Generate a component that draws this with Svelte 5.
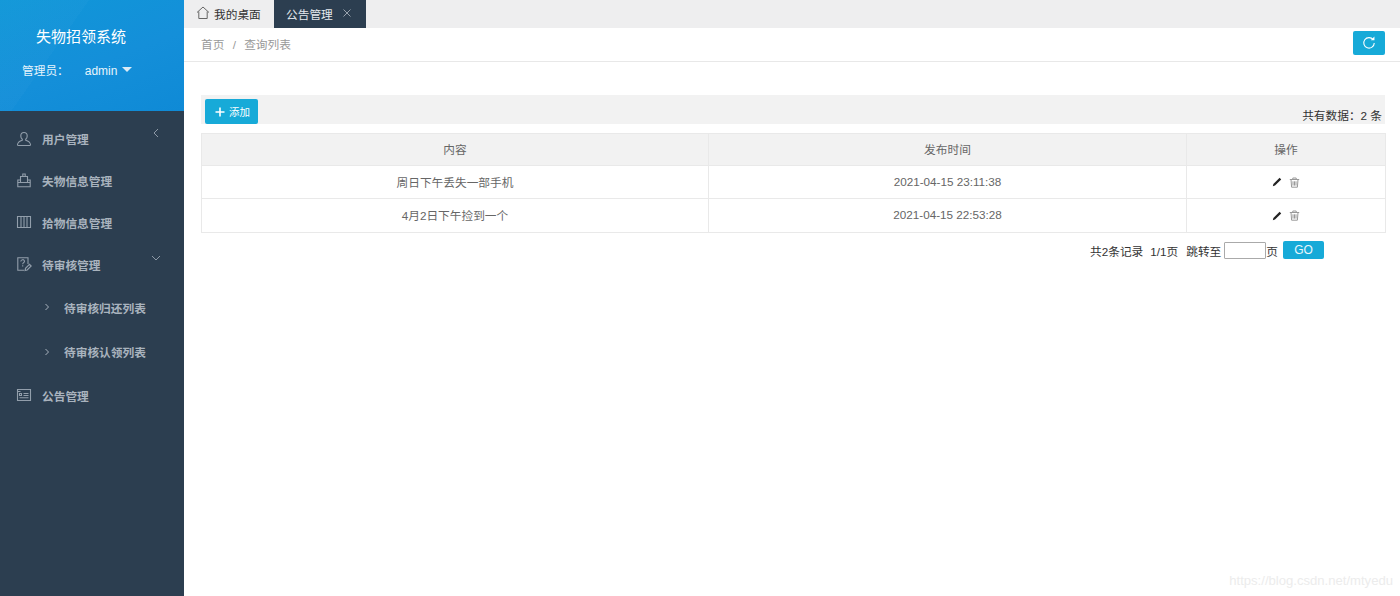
<script>
  const menu = [
    { label: '用户管理', icon: 'user', arrow: 'left' },
    { label: '失物信息管理', icon: 'box' },
    { label: '拾物信息管理', icon: 'columns' },
    { label: '待审核管理', icon: 'audit', arrow: 'down' },
    { label: '待审核归还列表', sub: true },
    { label: '待审核认领列表', sub: true },
    { label: '公告管理', icon: 'notice' }
  ];

  const rows = [
    { content: '周日下午丢失一部手机', time: '2021-04-15 23:11:38' },
    { content: '4月2日下午捡到一个', time: '2021-04-15 22:53:28' }
  ];
</script>

<div class="page">
  <aside class="sidebar">
    <header class="brand">
      <h1>失物招领系统</h1>
      <div class="account">
        <span>管理员：</span>
        <span class="name">admin</span>
        <i class="caret"></i>
      </div>
    </header>
    <nav class="menu">
      {#each menu as item}
        <a href="#top" class="item" class:sub={item.sub}>
          {#if item.sub}
            <svg class="sub-arrow" viewBox="0 0 8 8" width="8" height="8"><path d="M2.5 1 L5.5 4 L2.5 7" /></svg>
          {:else if item.icon === 'user'}
            <svg class="icon" viewBox="0 0 16 16" width="16" height="16"><path d="M8 1.500c-2 0-3.200 1.500-3.200 3.400 0 1.400.6 2.600 1.500 3.300v1c-2 .6-4.300 1.600-4.800 4.300-.1.6.2 1 .8 1h11.400c.6 0 .9-.4.8-1-.5-2.700-2.800-3.700-4.800-4.300v-1c.9-.7 1.500-1.900 1.500-3.300 0-1.900-1.200-3.400-3.200-3.400z" /></svg>
          {:else if item.icon === 'box'}
            <svg class="icon" viewBox="0 0 16 16" width="16" height="16"><path d="M4.500 8H1.800v6.700h12.400V8h-2.700" /><path d="M4.500 10.500V4.500h7v6zM6.800 4.500V2h2.400v2.500M1.800 10.500h12.400" /></svg>
          {:else if item.icon === 'columns'}
            <svg class="icon" viewBox="0 0 16 16" width="16" height="16"><path d="M1.500 2.500h13v11h-13zM5 2.500v11M8 2.500v11M11 2.500v11" /></svg>
          {:else if item.icon === 'audit'}
            <svg class="icon" viewBox="0 0 16 16" width="16" height="16"><path d="M12 8V1.800H1.800v12.400H8" /><path d="M4.800 5.500c0-2.400 3.700-2.400 3.700-.2 0 1.300-1.800 1.400-1.800 2.900M6.700 9.200v1.300" /><path d="M9 14.600l.5-2.300 4-4 1.700 1.700-4 4z" /></svg>
          {:else if item.icon === 'notice'}
            <svg class="icon" viewBox="0 0 16 16" width="16" height="16"><path d="M1.500 2.500h13v11h-13zM1.500 4.500h3M3.500 6.500h2v2h-2zM7.500 6.500h5M7.500 8.500h5M3.500 10.800h9" /></svg>
          {/if}
          <span>{item.label}</span>
          {#if item.arrow === 'left'}
            <svg class="fold" viewBox="0 0 10 10" width="10" height="10"><path d="M7 1 L3 5 L7 9" /></svg>
          {:else if item.arrow === 'down'}
            <svg class="fold" viewBox="0 0 10 10" width="10" height="10"><path d="M1 3 L5 7 L9 3" /></svg>
          {/if}
        </a>
      {/each}
    </nav>
  </aside>

  <main class="main">
    <div class="tabs">
      <a href="#top" class="tab">
        <svg class="home" viewBox="0 0 14 14" width="14" height="14"><path d="M1 6.500 L7 1 L13 6.500 M2.800 5.500V12.500H11.200V5.500" /></svg>
        我的桌面
      </a>
      <a href="#top" class="tab active">
        公告管理
        <svg class="close" viewBox="0 0 8 8" width="8" height="8"><path d="M.5 .5 L7.500 7.500 M7.500 .5 L.5 7.500" /></svg>
      </a>
    </div>

    <div class="crumbs">
      <div class="trail">
        <span>首页</span>
        <span class="sep">/</span>
        <span>查询列表</span>
      </div>
      <button class="refresh" aria-label="刷新">
        <svg viewBox="0 0 16 16" width="14" height="14"><path d="M12.800 4.200A6 6 0 1 0 14 8" /><path class="solid" d="M10 4.800h4.200V.6z" /></svg>
      </button>
    </div>

    <section class="content">
      <div class="toolbar">
        <button class="add">
          <svg viewBox="0 0 10 10" width="10" height="10"><path d="M5 .5v9M.5 5h9" /></svg>
          添加
        </button>
        <span class="total">共有数据：2 条</span>
      </div>

      <table>
        <thead>
          <tr>
            <th class="c1">内容</th>
            <th class="c2">发布时间</th>
            <th>操作</th>
          </tr>
        </thead>
        <tbody>
          {#each rows as row}
            <tr>
              <td>{row.content}</td>
              <td>{row.time}</td>
              <td>
                <span class="actions">
                  <svg class="edit" viewBox="0 0 10 10" width="10" height="10"><path d="M7.600.8l1.600 1.600-6.200 6.200-2.200.6.600-2.200z" /></svg>
                  <svg class="trash" viewBox="0 0 11 11" width="11" height="11"><path d="M.8 2.500h9.400M3.800 2.300V1h3.400v1.300M2 2.500l.6 7.700h5.800L9 2.500M4 4.300v4.300M5.500 4.300v4.300M7 4.300v4.300" /></svg>
                </span>
              </td>
            </tr>
          {/each}
        </tbody>
      </table>

      <div class="pager">
        <span>共2条记录</span>
        <span class="pages">1/1页</span>
        <span class="jump">跳转至</span>
        <input type="text" aria-label="页码" />
        <span>页</span>
        <button class="go">GO</button>
      </div>
    </section>
  </main>

  <span class="watermark">https://blog.csdn.net/mtyedu</span>
</div>

<style>
  :global(body) {
    margin: 0;
    background: #fff;
    font-family: "Liberation Sans", "Noto Sans CJK SC", sans-serif;
  }

  .page {
    display: flex;
    position: relative;
    height: 596px;
    overflow: hidden;
    font-size: 11.700px;
    color: #666;
  }

  .sidebar {
    flex: 0 0 184px;
    background: #2c3e50;
  }

  .brand {
    box-sizing: border-box;
    height: 111px;
    padding-top: 27px;
    color: #fff;
    background:
      linear-gradient(125deg, rgba(255, 255, 255, 0.02) 0 34%, transparent 34% 100%),
      linear-gradient(160deg, #1097d8 0%, #148fd9 55%, #0f8ad6 100%);
  }

  .brand h1 {
    margin: 0 0 0 36px;
    font-size: 15px;
    line-height: 20px;
    font-weight: 400;
  }

  .account {
    display: flex;
    align-items: center;
    margin: 14px 0 0 22px;
    line-height: 20px;
    color: #e6f4fc;
  }

  .name {
    margin-left: 16px;
    font-size: 12px;
  }

  .caret {
    width: 0;
    height: 0;
    margin: -4px 0 0 5px;
    border-left: 5px solid transparent;
    border-right: 5px solid transparent;
    border-top: 5px solid #dcebf6;
  }

  .menu {
    display: flex;
    flex-direction: column;
    padding-top: 7px;
  }

  .item {
    display: flex;
    position: relative;
    align-items: center;
    height: 42px;
    padding-left: 16px;
    color: #a9b3be;
    font-weight: 700;
    text-decoration: none;
  }

  .item:first-child {
    height: 41px;
  }

  .item.sub {
    height: 44.500px;
    padding-left: 43px;
  }

  .icon {
    flex: none;
    margin-right: 10px;
    fill: none;
    stroke: #929eab;
    stroke-width: 1.100;
  }

  .sub-arrow {
    flex: none;
    margin-right: 13px;
    fill: none;
    stroke: #a9b3be;
  }

  .fold {
    position: absolute;
    top: 10px;
    right: 23px;
    fill: none;
    stroke: #8e99a6;
  }

  .main {
    flex: 1;
    min-width: 0;
    display: flex;
    flex-direction: column;
  }

  .tabs {
    display: flex;
    height: 28px;
    background: #eeeeef;
  }

  .tab {
    display: flex;
    align-items: center;
    box-sizing: border-box;
    padding: 0 12px 2px;
    color: #333;
    text-decoration: none;
  }

  .tab:first-child {
    width: 90px;
  }

  .tab.active {
    width: 92px;
    color: #e4e8ec;
    background: #2c3e50;
  }

  .home {
    flex: none;
    margin-right: 4px;
    fill: none;
    stroke: #666;
  }

  .close {
    flex: none;
    margin-left: 10px;
    fill: none;
    stroke: #98a2ad;
  }

  .crumbs {
    display: flex;
    align-items: center;
    justify-content: space-between;
    box-sizing: border-box;
    height: 34px;
    padding: 0 15px 2px 17px;
    border-bottom: 1px solid #e8e8e8;
    color: #999;
  }

  .sep {
    margin: 0 5px;
  }

  .refresh {
    display: flex;
    align-items: center;
    justify-content: center;
    width: 32px;
    height: 24px;
    margin-top: -1px;
    padding: 0;
    border: 0;
    border-radius: 2px;
    background: #17aad8;
  }

  .refresh svg {
    fill: none;
    stroke: #fff;
    stroke-width: 1.300;
  }

  .refresh .solid {
    fill: #fff;
    stroke: none;
  }

  .content {
    padding: 33px 15px 0 17px;
  }

  .toolbar {
    display: flex;
    align-items: flex-end;
    justify-content: space-between;
    box-sizing: border-box;
    height: 29px;
    padding: 0 3px 0 4px;
    background: #f2f2f2;
  }

  .add {
    display: flex;
    align-items: center;
    box-sizing: border-box;
    gap: 4px;
    width: 53px;
    height: 25px;
    padding: 0 0 0 10px;
    border: 0;
    border-radius: 2px;
    background: #17aad8;
    color: #fff;
    font: inherit;
    font-size: 10.500px;
  }

  .add svg {
    flex: none;
    fill: none;
    stroke: #fff;
    stroke-width: 1.600;
  }

  .total {
    padding-bottom: 1px;
    color: #333;
    line-height: 14px;
  }

  table {
    width: calc(100% + 1px);
    margin-top: 9px;
    border-collapse: collapse;
    table-layout: fixed;
    border: 1px solid #e6e6e6;
  }

  th,
  td {
    box-sizing: content-box;
    height: 30px;
    padding: 0 0 2px;
    border: 1px solid #e9e9e9;
    text-align: center;
    font-size: 11.700px;
    font-weight: 400;
    color: #666;
  }

  th {
    height: 29px;
    background: #f2f2f2;
  }

  tr:last-child td {
    height: 31px;
  }

  .c1 {
    width: 506px;
  }

  .c2 {
    width: 477px;
  }

  .actions {
    display: inline-flex;
    align-items: center;
    gap: 7px;
    vertical-align: middle;
  }

  .edit {
    fill: #222;
  }

  .trash {
    fill: none;
    stroke: #999;
  }

  .pager {
    display: flex;
    align-items: center;
    justify-content: flex-end;
    height: 18px;
    margin-top: 8px;
    padding-right: 61px;
    color: #333;
  }

  .pages {
    margin-left: 7px;
  }

  .jump {
    margin-left: 8px;
    margin-right: 3px;
  }

  input {
    box-sizing: border-box;
    width: 42px;
    height: 17px;
    padding: 0;
    border: 1px solid #aaa;
    border-radius: 1px;
    background: #fff;
  }

  .go {
    width: 41px;
    height: 18px;
    margin-left: 5px;
    padding: 0;
    border: 0;
    border-radius: 2px;
    background: #17aad8;
    color: #e8f7fc;
    font: inherit;
    font-size: 12px;
  }

  .watermark {
    position: absolute;
    right: 7px;
    bottom: 8px;
    color: #ececec;
    font-size: 13.100px;
  }
</style>
